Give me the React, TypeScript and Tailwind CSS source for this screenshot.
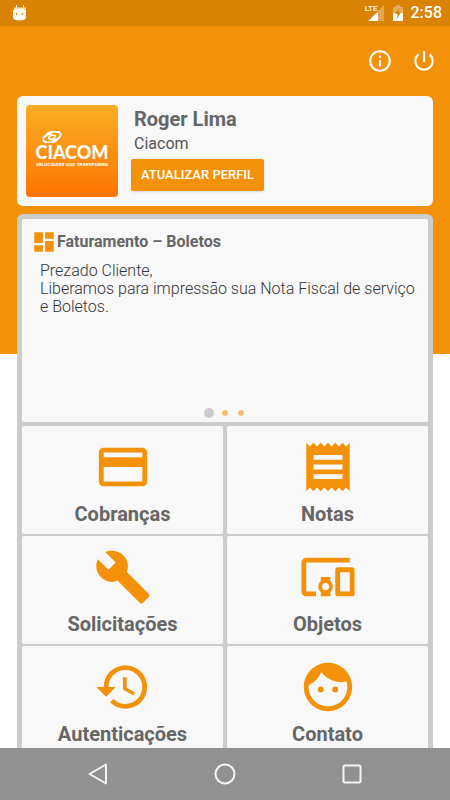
import { type ReactNode } from "react";
import { type IconType } from "react-icons";
import {
	MdBuild,
	MdDashboard,
	MdDevicesOther,
	MdFace,
	MdHistory,
	MdInfoOutline,
	MdPayment,
	MdPowerSettingsNew,
	MdReceipt,
} from "react-icons/md";

type MenuItem = {
	label: string;
	icon: IconType;
};

const menuItems: MenuItem[] = [
	{ label: "Cobranças", icon: MdPayment },
	{ label: "Notas", icon: MdReceipt },
	{ label: "Solicitações", icon: MdBuild },
	{ label: "Objetos", icon: MdDevicesOther },
	{ label: "Autenticações", icon: MdHistory },
	{ label: "Contato", icon: MdFace },
];

const StatusBar = () => {
	return (
		<div className="flex h-[26px] shrink-0 items-center bg-[#d98204] pr-2 pl-3 text-white">
			<svg className="h-4 w-4" viewBox="0 0 16 16" aria-hidden="true">
				<path d="M4.5 0v4M11.5 0v4" stroke="#fff" strokeWidth="1" />
				<path d="M2 3.5h12" stroke="#fbe0b5" strokeWidth="2" />
				<path d="M1 5q7-2 13 0v7q0 3.5-6.5 3.5T1 12z" fill="#fff" />
				<circle cx="4.5" cy="9" r="0.9" fill="#d98204" />
				<circle cx="10.5" cy="9" r="0.9" fill="#d98204" />
			</svg>
			<div className="ml-auto flex items-center">
				<div className="flex items-start">
					<span className="text-[8px] leading-[8px] font-medium">LTE</span>
					<svg className="-ml-[10px] h-4 w-4" viewBox="0 0 16 16" aria-hidden="true">
						<path d="M16 0v16h-6V6z" fill="#fff" opacity="0.3" />
						<path d="M10 6.5V16H0z" fill="#fff" />
					</svg>
				</div>
				<svg className="ml-2 h-4 w-3" viewBox="0 0 12 16" aria-hidden="true">
					<path d="M1 2h3V0h4v2h3v6H1z" fill="#fff" opacity="0.35" />
					<path d="M1 8h10v8H1z" fill="#fff" />
					<path d="M7.5 3L3 9h2.5L4.5 14 9 7.5H6.5z" fill="#d98204" />
				</svg>
				<span className="ml-[7px] text-base leading-5 font-medium">2:58</span>
			</div>
		</div>
	);
};

const Logo = () => {
	return (
		<div className="flex h-[92px] w-[92px] shrink-0 flex-col items-center rounded bg-linear-to-b from-[#f9ad22] to-[#ff7300] pt-[26px] text-white">
			<svg className="mr-10 h-3 w-5" viewBox="0 0 20 12" aria-hidden="true">
				<g fill="none" stroke="#fff" strokeLinecap="round">
					<path d="M5 3C9 0 17.5-0.5 18.5 3c0.7 3.5-4 6.5-8 6.5" strokeWidth="2" />
					<path d="M14.5 9.5C9 12.5 1.5 12 1.2 8.5 1 5.5 5.5 3 9 2.8" strokeWidth="2" />
					<path d="M7 8c-1.5-2 2-4.5 5.5-3.5" strokeWidth="1.5" />
					<path d="M13 4.5c1.5 1.8-2 4-5 3.5" strokeWidth="1.5" />
				</g>
			</svg>
			<span className="font-[Lato] text-[18px] leading-[18px] font-black">CIACOM</span>
			<span className="mt-px font-['DejaVu_Sans'] text-[4px] leading-[5px] font-bold whitespace-nowrap">
				VELOCIDADE QUE TRANSFORMA
			</span>
		</div>
	);
};

const ProfileCard = () => {
	return (
		<section className="flex rounded-md bg-[#f8f8f8] p-[9px]">
			<Logo />
			<div className="ml-4">
				<h1 className="text-xl leading-7 font-bold text-[#666]">Roger Lima</h1>
				<p className="text-base leading-[22px] text-[#555]">Ciacom</p>
				<button
					type="button"
					className="-ml-[3px] mt-1 h-8 rounded-xs bg-[#f39208] px-[10px] text-[13px] font-medium text-white shadow"
				>
					ATUALIZAR PERFIL
				</button>
			</div>
		</section>
	);
};

const NewsCard = () => {
	return (
		<article className="flex h-[203px] flex-col rounded-xs bg-[#f8f8f8] px-3 pt-[10px]">
			<h2 className="flex items-center text-base leading-5 font-bold text-[#666]">
				<MdDashboard className="-ml-[3px] h-[26px] w-[26px] text-[#f39208]" />
				Faturamento – Boletos
			</h2>
			<p className="mt-[7px] ml-[6px] text-base leading-[18px] font-light text-[#333]">
				Prezado Cliente,
				<br />
				Liberamos para impressão sua Nota Fiscal de serviço e Boletos.
			</p>
			<div className="mt-auto mb-1 flex justify-center">
				<span className="flex w-4 items-center justify-center">
					<span className="h-[10px] w-[10px] rounded-full bg-[#ccc]" />
				</span>
				<span className="flex w-4 items-center justify-center">
					<span className="h-[6px] w-[6px] rounded-full bg-[#f6bf70]" />
				</span>
				<span className="flex w-4 items-center justify-center">
					<span className="h-[6px] w-[6px] rounded-full bg-[#f6bf70]" />
				</span>
			</div>
		</article>
	);
};

const MenuTile = ({ label, icon: Icon }: MenuItem) => {
	return (
		<button
			type="button"
			className="flex flex-col items-center rounded-xs bg-[#f8f8f8] pt-3 pb-2 text-xl leading-6 font-bold text-[#666]"
		>
			<Icon className="mb-[6px] h-[58px] w-[58px] text-[#f39208]" />
			{label}
		</button>
	);
};

const NavButton = ({ label, children }: { label: string; children: ReactNode }) => {
	return (
		<button type="button" aria-label={label}>
			<svg
				className="h-6 w-6"
				viewBox="0 0 24 24"
				fill="none"
				stroke="#f5f5f5"
				strokeWidth="2"
				strokeLinejoin="round"
			>
				{children}
			</svg>
		</button>
	);
};

export default function App() {
	return (
		<div className="flex h-screen flex-col overflow-hidden bg-white font-[Roboto,sans-serif]">
			<StatusBar />
			<main className="min-h-0 flex-1 overflow-hidden bg-[linear-gradient(#f39208_328px,#fff_328px)] px-[17px]">
				<header className="flex h-[70px] items-center justify-end gap-[18px] text-white">
					<button type="button" aria-label="Informações">
						<MdInfoOutline className="h-[26px] w-[26px]" />
					</button>
					<button type="button" aria-label="Sair" className="-mr-1">
						<MdPowerSettingsNew className="h-[26px] w-[26px]" />
					</button>
				</header>
				<ProfileCard />
				<section className="mt-2 rounded-md bg-[#ccc] p-[5px]">
					<NewsCard />
					<div className="mt-1 grid grid-cols-2 gap-x-1 gap-y-0.5">
						{menuItems.map((item) => (
							<MenuTile key={item.label} {...item} />
						))}
					</div>
				</section>
			</main>
			<nav className="flex h-[52px] shrink-0 items-center justify-center gap-[103px] bg-[#919191]">
				<NavButton label="Voltar">
					<path d="M20 2.5v19L3.5 12z" />
				</NavButton>
				<NavButton label="Início">
					<circle cx="12" cy="12" r="9.5" />
				</NavButton>
				<NavButton label="Recentes">
					<rect x="3.5" y="3.5" width="17" height="17" rx="1" />
				</NavButton>
			</nav>
		</div>
	);
}
